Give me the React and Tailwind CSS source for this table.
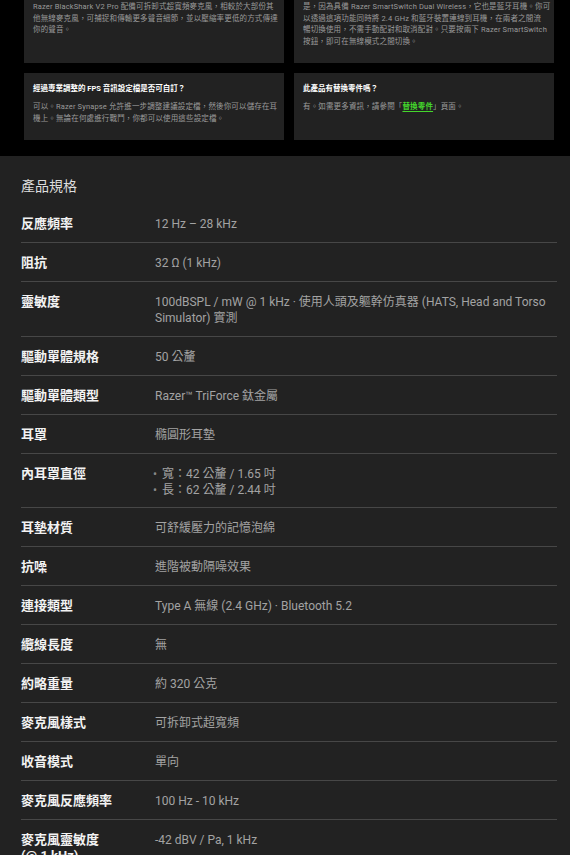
import React from 'react';

const FONT = "font-['Roboto','Noto_Sans_CJK_TC',sans-serif]";

const faqs = [
  [
    {
      q: 'Razer BlackShark V2 Pro 的麥克風有什麼特別之處？',
      a: [
        'Razer BlackShark V2 Pro 配備可拆卸式超寬頻麥克風，相較於大部份其',
        '他無線麥克風，可捕捉和傳輸更多聲音細節，並以壓縮率更低的方式傳達',
        '你的聲音。',
      ],
    },
    {
      q: 'Razer BlackShark V2 Pro 是否為藍牙耳機？',
      a: [
        '是，因為具備 Razer SmartSwitch Dual Wireless，它也是藍牙耳機。你可',
        '以透過這項功能同時將 2.4 GHz 和藍牙裝置連線到耳機，在兩者之間流',
        '暢切換使用，不需手動配對和取消配對。只要按兩下 Razer SmartSwitch',
        '按鈕，即可在無線模式之間切換。',
      ],
    },
  ],
  [
    {
      q: '經過專業調整的 FPS 音訊設定檔是否可自訂？',
      a: [
        '可以。Razer Synapse 允許進一步調整建議設定檔，然後你可以儲存在耳',
        '機上。無論在何處進行戰鬥，你都可以使用這些設定檔。',
      ],
    },
    {
      q: '此產品有替換零件嗎？',
      link: true,
    },
  ],
];

const specs = [
  ['反應頻率', '12 Hz – 28 kHz'],
  ['阻抗', '32 Ω (1 kHz)'],
  ['靈敏度', '100dBSPL / mW @ 1 kHz · 使用人頭及軀幹仿真器 (HATS, Head and Torso Simulator) 實測'],
  ['驅動單體規格', '50 公釐'],
  ['驅動單體類型', 'Razer™ TriForce 鈦金屬'],
  ['耳罩', '橢圓形耳墊'],
  ['內耳罩直徑', ['寬：42 公釐 / 1.65 吋', '長：62 公釐 / 2.44 吋']],
  ['耳墊材質', '可舒緩壓力的記憶泡綿'],
  ['抗噪', '進階被動隔噪效果'],
  ['連接類型', 'Type A 無線 (2.4 GHz) · Bluetooth 5.2'],
  ['纜線長度', '無'],
  ['約略重量', '約 320 公克'],
  ['麥克風樣式', '可拆卸式超寬頻'],
  ['收音模式', '單向'],
  ['麥克風反應頻率', '100 Hz - 10 kHz'],
  ['麥克風靈敏度|(@ 1 kHz)', '-42 dBV / Pa, 1 kHz'],
];

const FaqCard = ({ item }) => (
  <div className="bg-[#222222] px-[9px] pt-[10px] pb-[16px]">
    <h4 className="whitespace-nowrap text-[7.5px] leading-[11px] font-bold text-white">{item.q}</h4>
    <div className="mt-[7px] text-[7.5px] leading-[11.5px] tracking-[0.15px] text-[#9a9a9a]">
      {item.link ? (
        <p>
          有。如需更多資訊，請參閱「
          <span className="font-bold text-[#44d62c] underline underline-offset-2">替換零件</span>
          」頁面。
        </p>
      ) : (
        item.a.map((line) => (
          <p key={line} className="whitespace-nowrap">
            {line}
          </p>
        ))
      )}
    </div>
  </div>
);

const SpecRow = ({ label, value }) => {
  const [l1, l2] = label.split('|');
  return (
    <div className={`flex border-b border-[#474747] pt-3 ${Array.isArray(value) ? 'pb-[9px]' : 'pb-[10px]'}`}>
      <div className="w-[134px] shrink-0 text-[13px] leading-4 font-bold text-[#f2f2f2]">
        {l1}
        {l2 && (
          <>
            <br />
            {l2}
          </>
        )}
      </div>
      <div className="flex-1 text-[12px] leading-4 text-[#a3a3a3]">
        {Array.isArray(value) ? (
          <ul className="-ml-[2px]">
            {value.map((v) => (
              <li key={v} className="flex gap-[5px]">
                <span className="text-[#888]">•</span>
                <span>{v}</span>
              </li>
            ))}
          </ul>
        ) : (
          value
        )}
      </div>
    </div>
  );
};

export default function App() {
  return (
    <div className={`h-[855px] w-[570px] overflow-hidden bg-black ${FONT}`}>
      {/* FAQ cards (page scrolled, first row cut at top) */}
      <div className="h-[156px] overflow-hidden">
        <div className="-mt-[27px] flex flex-col gap-[10px] pl-6 pr-4">
          {faqs.map((row, i) => (
            <div key={i} className="grid grid-cols-2 gap-[10px]">
              {row.map((item) => (
                <FaqCard key={item.q} item={item} />
              ))}
            </div>
          ))}
        </div>
      </div>

      {/* Specs */}
      <div className="bg-[#222222] pl-[21px] pr-[13px] pt-5">
        <h2 className="text-[14px] leading-5 text-[#dedede] mb-2">產品規格</h2>
        <div>
          {specs.map(([l, v]) => (
            <SpecRow key={l} label={l} value={v} />
          ))}
        </div>
      </div>
    </div>
  );
}
